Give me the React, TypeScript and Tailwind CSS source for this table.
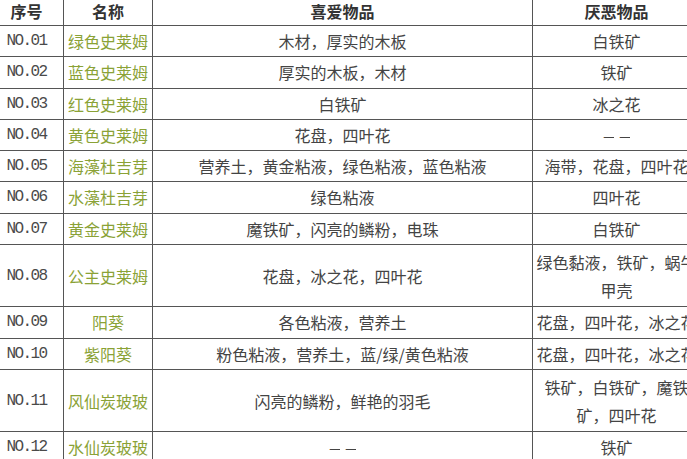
import React from "react";

type Row = {
  no: string;
  name: string;
  like: string;
  dislike: string;
  tall?: boolean;
};

const rows: Row[] = [
  { no: "NO.01", name: "绿色史莱姆", like: "木材，厚实的木板", dislike: "白铁矿" },
  { no: "NO.02", name: "蓝色史莱姆", like: "厚实的木板，木材", dislike: "铁矿" },
  { no: "NO.03", name: "红色史莱姆", like: "白铁矿", dislike: "冰之花" },
  { no: "NO.04", name: "黄色史莱姆", like: "花盘，四叶花", dislike: "——" },
  { no: "NO.05", name: "海藻杜吉芽", like: "营养土，黄金粘液，绿色粘液，蓝色粘液", dislike: "海带，花盘，四叶花" },
  { no: "NO.06", name: "水藻杜吉芽", like: "绿色粘液", dislike: "四叶花" },
  { no: "NO.07", name: "黄金史莱姆", like: "魔铁矿，闪亮的鳞粉，电珠", dislike: "白铁矿" },
  { no: "NO.08", name: "公主史莱姆", like: "花盘，冰之花，四叶花", dislike: "绿色黏液，铁矿，蜗牛甲壳", tall: true },
  { no: "NO.09", name: "阳葵", like: "各色粘液，营养土", dislike: "花盘，四叶花，冰之花" },
  { no: "NO.10", name: "紫阳葵", like: "粉色粘液，营养土，蓝/绿/黄色粘液", dislike: "花盘，四叶花，冰之花" },
  { no: "NO.11", name: "风仙炭玻玻", like: "闪亮的鳞粉，鲜艳的羽毛", dislike: "铁矿，白铁矿，魔铁矿，四叶花", tall: true },
  { no: "NO.12", name: "水仙炭玻玻", like: "——", dislike: "铁矿" },
];

const cjk = "font-['Noto_Sans_CJK_SC',sans-serif]";
const grid = "grid grid-cols-[74px_89px_380px_168px] border-b border-[#555]";
const cell = "flex items-center justify-center text-center border-r border-[#555] px-[3px] leading-[28px]";

// the source's dashes are two short strokes with a gap
function Text({ value }: { value: string }) {
  if (value === "——")
    return (
      <span className="flex gap-[5px]">
        <span className="inline-block w-[11px] overflow-hidden">—</span>
        <span className="inline-block w-[11px] overflow-hidden">—</span>
      </span>
    );
  return <>{value}</>;
}

export default function App() {
  return (
    <div className={`w-[687px] h-[459px] overflow-hidden bg-white text-[16px] text-[#444] ${cjk}`}>
      <div className="w-[711px] ml-[-10px] mt-[-3px]">
        {/* header */}
        <div className={`${grid} h-[29px] font-bold text-[#333]`}>
          <div className={`${cell} leading-[20px]`}>序号</div>
          <div className={`${cell} leading-[20px]`}>名称</div>
          <div className={`${cell} leading-[20px]`}>喜爱物品</div>
          <div className={`${cell} leading-[20px]`}>厌恶物品</div>
        </div>

        {rows.map((r) => (
          <div key={r.no} className={`${grid} ${r.tall ? "h-[62.5px]" : "h-[31.25px]"}`}>
            <div className={`${cell} font-['Liberation_Mono',monospace] tracking-[-1.6px] text-[#4a4a4a]`}>
              {r.no}
            </div>
            <div className={`${cell} text-[#8aa236]`}>{r.name}</div>
            <div className={cell}>
              <Text value={r.like} />
            </div>
            <div className={cell}>
              <Text value={r.dislike} />
            </div>
          </div>
        ))}
      </div>
    </div>
  );
}
